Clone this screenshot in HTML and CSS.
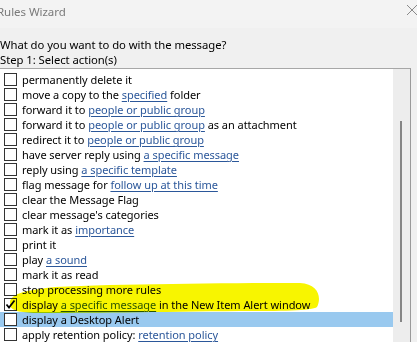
FILE: index.html
```html
<!DOCTYPE html>
<html>
<head>
<meta charset="utf-8">
<link rel="stylesheet" href="styles.css">
</head>
<body>
<div class="window">
  <div class="titlebar">
    <span class="title">Rules Wizard</span>
    <svg class="close" width="12" height="12" viewBox="0 0 12 12"><path d="M1 1 L11 11 M11 1 L1 11" stroke="#8a8a8a" stroke-width="1" fill="none"/></svg>
  </div>
  <div class="content">
    <div class="question">What do you want to do with the message?</div>
    <div class="step">Step 1: Select action(s)</div>
    <div class="listbox">
      <ul class="items">
        <li class="item"><span class="cb"></span><span>permanently delete it</span></li>
        <li class="item"><span class="cb"></span><span>move a copy to the <a>specified</a> folder</span></li>
        <li class="item"><span class="cb"></span><span>forward it to <a>people or public group</a></span></li>
        <li class="item"><span class="cb"></span><span>forward it to <a>people or public group</a> as an attachment</span></li>
        <li class="item"><span class="cb"></span><span>redirect it to <a>people or public group</a></span></li>
        <li class="item"><span class="cb"></span><span>have server reply using <a>a specific message</a></span></li>
        <li class="item"><span class="cb"></span><span>reply using <a>a specific template</a></span></li>
        <li class="item"><span class="cb"></span><span>flag message for <a>follow up at this time</a></span></li>
        <li class="item"><span class="cb"></span><span>clear the Message Flag</span></li>
        <li class="item"><span class="cb"></span><span>clear message's categories</span></li>
        <li class="item"><span class="cb"></span><span>mark it as <a>importance</a></span></li>
        <li class="item"><span class="cb"></span><span>print it</span></li>
        <li class="item"><span class="cb"></span><span>play <a>a sound</a></span></li>
        <li class="item"><span class="cb"></span><span>mark it as read</span></li>
        <li class="item"><span class="cb"></span><span>stop processing more rules</span></li>
        <li class="item"><span class="cb checked"><svg width="11" height="11" viewBox="0 0 11 11"><path d="M1.5 5.5 L4 8.5 L9.5 1.5" stroke="#000" stroke-width="1.8" fill="none"/></svg></span><span>display <a>a specific message</a> in the New Item Alert window</span></li>
        <li class="item selected"><span class="cb"></span><span>display a Desktop Alert</span></li>
        <li class="item"><span class="cb"></span><span>apply retention policy: <a>retention policy</a></span></li>
      </ul>
      <div class="scrollbar"><div class="thumb"></div></div>
    </div>
  </div>
  <svg class="highlight" width="417" height="342" viewBox="0 0 417 342">
    <path d="M10 301 C 14 292, 30 290, 55 287 C 120 284, 220 283, 300 283 C 318 284, 322 297, 317 307 C 312 311, 280 311, 240 311 C 160 312, 80 313, 40 313 C 22 313, 12 311, 10 306 Z" fill="#f8f500"/>
  </svg>
</div>
</body>
</html>
```
FILE: styles.css
```css
html, body {
  margin: 0;
  padding: 0;
  background: #f0f0f0;
}
.window {
  position: relative;
  width: 417px;
  height: 342px;
  overflow: hidden;
  font-family: "Noto Sans", "Open Sans", sans-serif;
  font-size: 11px;
  letter-spacing: -0.05px;
  color: #000;
  background: #f0f0f0;
}
.titlebar {
  height: 28px;
  background: #f3f3f3;
  display: flex;
  align-items: center;
  justify-content: space-between;
  padding: 0 0 6px 0;
  box-sizing: border-box;
}
.title {
  color: #7a7a7a;
  font-size: 11.5px;
  margin-left: -3px;
}
.close {
  margin-right: -1px;
  margin-top: -2px;
}
.content {
  display: flex;
  flex-direction: column;
}
.question {
  margin-top: 9px;
  height: 15px;
  line-height: 15px;
  font-size: 11.3px;
}
.step {
  height: 15px;
  line-height: 15px;
  font-size: 11.3px;
}
.listbox {
  margin-top: 1px;
  margin-left: -2px;
  width: 411px;
  height: 290px;
  border: 1px solid #a7a7a7;
  border-right-color: #9a9a9a;
  background: #fff;
  display: flex;
}
.items {
  list-style: none;
  margin: 0;
  padding: 3px 0 0 0;
  flex: 1;
}
.item {
  display: flex;
  align-items: center;
  height: 15px;
  line-height: 15px;
  padding-left: 5px;
  white-space: nowrap;
}
.item.selected {
  background: #99c9ef;
}
.cb {
  width: 11px;
  height: 11px;
  border: 1px solid #333;
  background: #fff;
  margin-right: 5px;
  flex: none;
  display: flex;
  align-items: center;
  justify-content: center;
}
.cb.checked {
  background: transparent;
}
.item a {
  color: #2b579a;
  text-decoration: underline;
  text-underline-offset: 2px;
}
.scrollbar {
  width: 17px;
  background: #ededed;
  position: relative;
  flex: none;
}
.thumb {
  position: absolute;
  left: 7px;
  top: 52px;
  width: 2px;
  height: 201px;
  background: #858585;
}
.highlight {
  position: absolute;
  left: 0;
  top: 0;
  mix-blend-mode: multiply;
  pointer-events: none;
}
```
